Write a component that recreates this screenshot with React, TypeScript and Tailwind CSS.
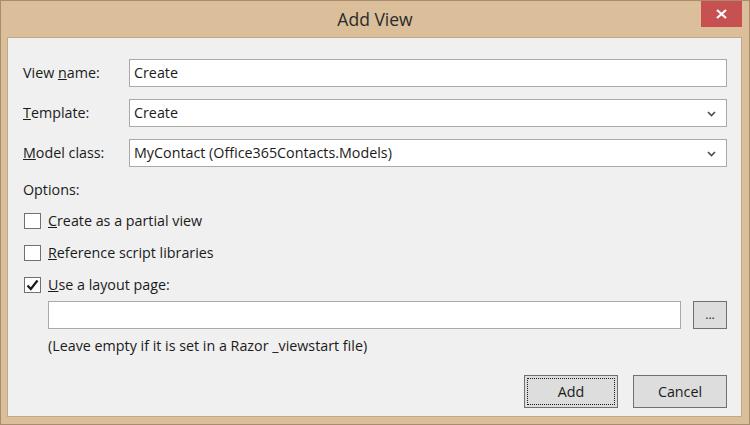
import React from "react";

const font = { fontFamily: '"Open Sans", "Noto Sans", sans-serif' };

function Chevron() {
  return (
    <svg width="9" height="6" viewBox="0 0 9 6" className="absolute right-[10px] top-[11px]">
      <path d="M1 1 L4.5 4.5 L8 1" fill="none" stroke="#4d4d4d" strokeWidth="1.6" />
    </svg>
  );
}

function Checkbox({ checked }: { checked?: boolean }) {
  return (
    <div className="relative h-[16px] w-[17px] shrink-0 border border-[#707070] bg-white">
      {checked && (
        <svg width="15" height="14" viewBox="0 0 15 14" className="absolute left-0 top-0">
          <path d="M2.5 7.5 L5.8 11 L12.5 2.5" fill="none" stroke="#1a1a1a" strokeWidth="2.2" />
        </svg>
      )}
    </div>
  );
}

export default function App() {
  return (
    <div
      className="flex h-[425px] w-[750px] flex-col border border-[#a78d6c] bg-[#dbbf9a] text-[14.3px] text-[#1b1b1b]"
      style={font}
    >
      <div className="relative flex h-[36px] shrink-0 items-center justify-center">
        <span className="text-[17.5px] text-[#2a2a2a]">Add View</span>
        <div className="absolute right-[7px] top-0 flex h-[26px] w-[41px] items-center justify-center bg-[#c75050]">
          <svg width="11" height="10" viewBox="0 0 11 10">
            <path d="M1 1 L10 9 M10 1 L1 9" stroke="white" strokeWidth="2.2" />
          </svg>
        </div>
      </div>

      <div className="mb-[7px] ml-[6px] mr-[7px] flex flex-1 flex-col border border-[#bfa987] bg-[#f0f0f0] pl-[15px] pr-[14px] pt-[21px]">
        <div className="flex h-[28px] items-center">
          <span className="w-[106px]">
            View <u>n</u>ame:
          </span>
          <div className="flex h-full flex-1 items-center border border-[#a9a9a9] bg-white pl-[4px]">Create</div>
        </div>
        <div className="mt-[12px] flex h-[28px] items-center">
          <span className="w-[106px]">
            <u>T</u>emplate:
          </span>
          <div className="relative flex h-full flex-1 items-center border border-[#a9a9a9] bg-white pl-[4px]">
            Create
            <Chevron />
          </div>
        </div>
        <div className="mt-[12px] flex h-[28px] items-center">
          <span className="w-[106px]">
            <u>M</u>odel class:
          </span>
          <div className="relative flex h-full flex-1 items-center border border-[#a9a9a9] bg-white pl-[4px]">
            MyContact (Office365Contacts.Models)
            <Chevron />
          </div>
        </div>

        <div className="mt-[12px] flex h-[22px] items-center">Options:</div>

        <div className="mt-[9px] flex h-[22px] items-center gap-[7px] pl-[1px]">
          <Checkbox />
          <span>
            <u>C</u>reate as a partial view
          </span>
        </div>
        <div className="mt-[10px] flex h-[22px] items-center gap-[7px] pl-[1px]">
          <Checkbox />
          <span>
            <u>R</u>eference script libraries
          </span>
        </div>
        <div className="mt-[10px] flex h-[22px] items-center gap-[7px] pl-[1px]">
          <Checkbox checked />
          <span>
            <u>U</u>se a layout page:
          </span>
        </div>

        <div className="mt-[5px] flex h-[28px] items-center pl-[25px]">
          <div className="h-full flex-1 border border-[#a9a9a9] bg-white" />
          <div className="ml-[12px] flex h-full w-[34px] items-center justify-center border border-[#707070] bg-[#dddddd] text-[12px]">
            ...
          </div>
        </div>
        <div className="mt-[6px] flex h-[22px] items-center pl-[25px]">
          (Leave empty if it is set in a Razor _viewstart file)
        </div>

        <div className="mt-[18px] flex justify-end gap-[15px]">
          <div className="flex h-[33px] w-[94px] items-center justify-center border border-[#707070] bg-[#dddddd] p-[2px]">
            <div className="flex h-full w-full items-center justify-center border border-dotted border-[#1b1b1b]">
              Add
            </div>
          </div>
          <div className="flex h-[33px] w-[94px] items-center justify-center border border-[#707070] bg-[#dddddd]">
            Cancel
          </div>
        </div>
      </div>
    </div>
  );
}
